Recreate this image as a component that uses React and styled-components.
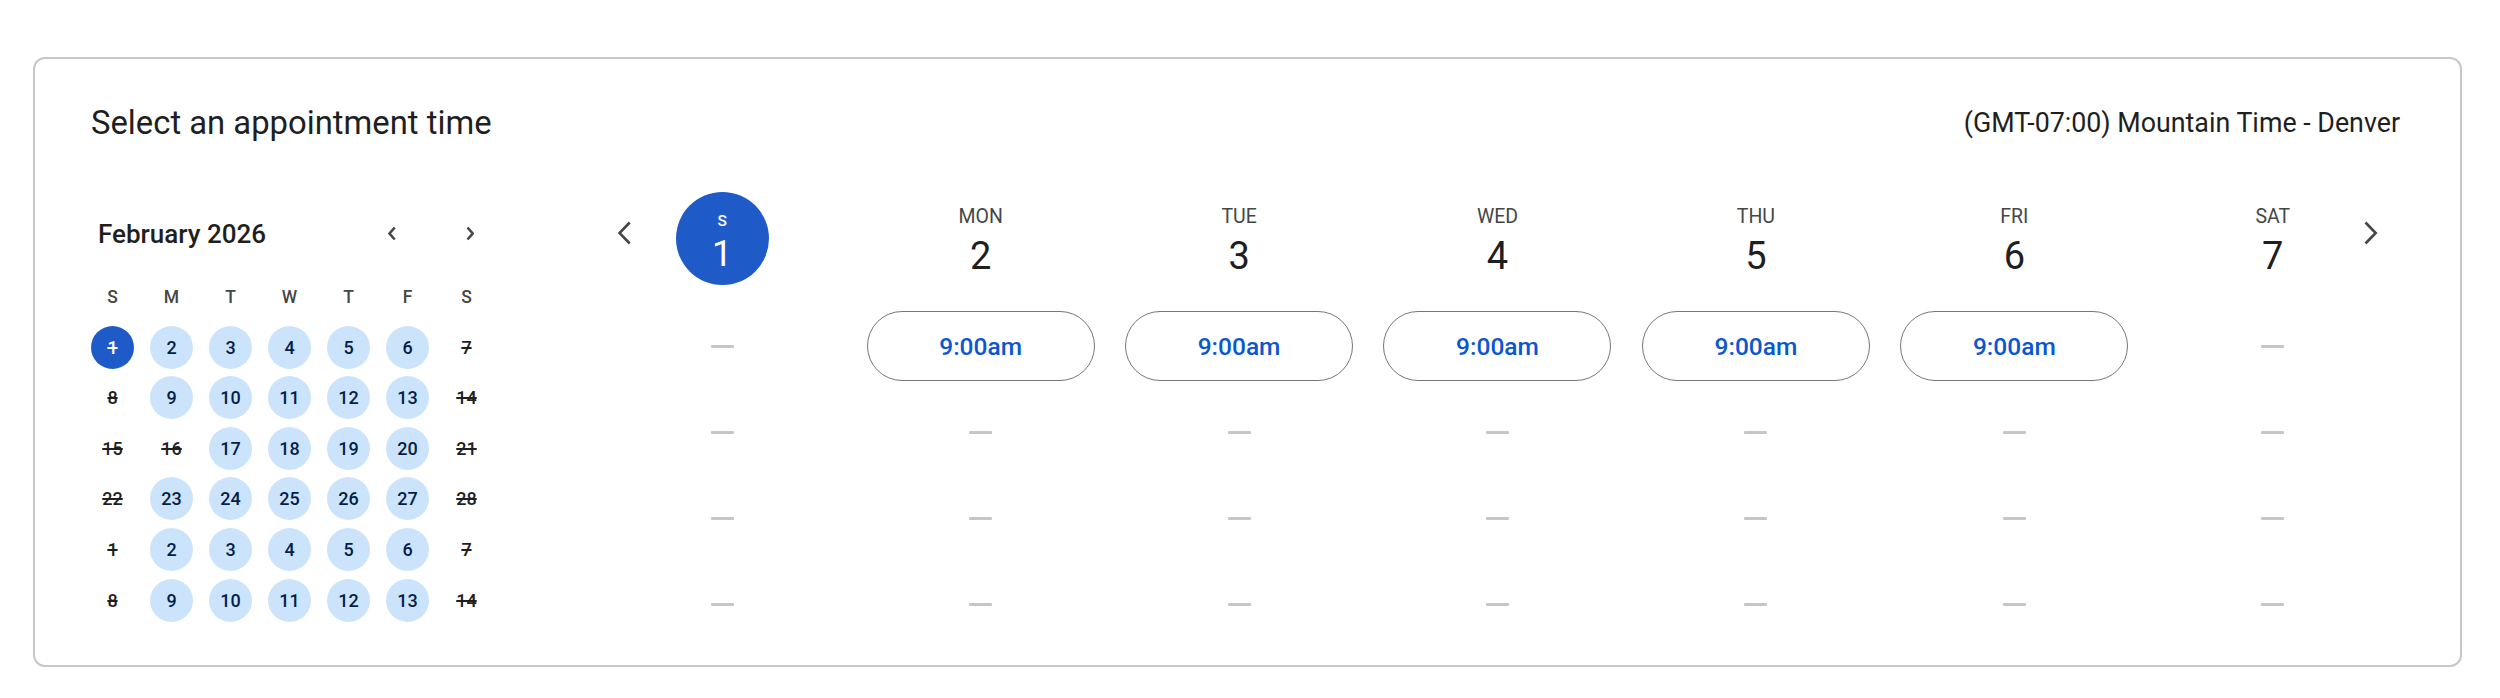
import React from 'react'
import styled, { createGlobalStyle } from 'styled-components'

const GlobalStyle = createGlobalStyle`
  html, body {
    margin: 0;
    padding: 0;
    background: #ffffff;
    font-family: Roboto, "Liberation Sans", Arial, sans-serif;
    color: #1f1f1f;
  }
  * { box-sizing: border-box; }
`

const Page = styled.div`
  padding: 57px 38px 0 33px;
`

const Card = styled.div`
  height: 610px;
  border: 2px solid #c7c7c7;
  border-radius: 12px;
  padding: 44px 58px 0 56px;
`

const TopBar = styled.div`
  display: flex;
  justify-content: space-between;
  align-items: flex-start;
`

const Title = styled.h1`
  margin: 0;
  font-size: 32.8px;
  line-height: 40px;
  font-weight: 400;
  color: #1f1f1f;
`

const TimeZone = styled.div`
  font-size: 26.8px;
  line-height: 40px;
  color: #1f1f1f;
  margin-right: 2px;
`

const Body = styled.div`
  display: flex;
  gap: 104px;
  margin-top: 49px;
`

const MiniCal = styled.div`
  width: 398px;
  flex: none;
  padding-top: 20px;
`

const MonthHeader = styled.div`
  display: flex;
  align-items: center;
  height: 43px;
  margin-bottom: 20px;
`

const MonthName = styled.div`
  flex: 1;
  padding-left: 7px;
  font-size: 26px;
  font-weight: 500;
  color: #1f1f1f;
`

const NavGroup = styled.div`
  display: flex;
  gap: 38px;
  margin-right: -1px;
`

const IconButton = styled.button`
  width: 40px;
  height: 40px;
  border: none;
  background: transparent;
  padding: 0;
  display: flex;
  align-items: center;
  justify-content: center;
  color: #444746;
  cursor: pointer;
`

const DayGrid = styled.div`
  display: grid;
  grid-template-columns: repeat(7, 43px);
  grid-auto-rows: 43px;
  column-gap: 16px;
  row-gap: 7.6px;
`

const WeekLetter = styled.div`
  display: flex;
  align-items: center;
  justify-content: center;
  font-size: 17.5px;
  font-weight: 500;
  color: #444746;
`

const DayCell = styled.div`
  display: flex;
  align-items: center;
  justify-content: center;
  border-radius: 50%;
  font-size: 18px;
  font-weight: 500;
  background: ${p => (p.$selected ? '#1f5bc8' : p.$open ? '#cce4fb' : 'transparent')};
  color: ${p => (p.$selected ? '#ffffff' : p.$open ? '#041e49' : '#1f1f1f')};
  text-decoration: ${p => (p.$open ? 'none' : 'line-through')};
  text-decoration-thickness: 1.5px;
`

const Week = styled.div`
  flex: 1;
  position: relative;
  display: grid;
  grid-template-columns: repeat(7, 1fr);
`

const WeekNav = styled(IconButton)`
  position: absolute;
  top: 17px;
  width: 48px;
  height: 48px;
  ${p => (p.$side === 'left' ? 'left: 8px;' : 'right: 7px;')}
`

const DayColumn = styled.div`
  display: flex;
  flex-direction: column;
  align-items: center;
`

const DayHead = styled.div`
  width: 93px;
  height: 93px;
  border-radius: 50%;
  display: flex;
  flex-direction: column;
  align-items: center;
  justify-content: flex-start;
  padding-top: ${p => (p.$selected ? '20px' : '13px')};
  background: ${p => (p.$selected ? '#1f5bc8' : 'transparent')};
  color: ${p => (p.$selected ? '#ffffff' : '#1f1f1f')};
`

const DayLabel = styled.div`
  font-size: ${p => (p.$selected ? '15.5px' : '19.5px')};
  line-height: ${p => (p.$selected ? '18px' : '24px')};
  font-weight: ${p => (p.$selected ? 500 : 400)};
  color: ${p => (p.$selected ? '#ffffff' : '#444746')};
`

const DayNumber = styled.div`
  font-size: ${p => (p.$selected ? '36px' : '38px')};
  line-height: 44px;
  font-weight: 400;
  margin-top: ${p => (p.$selected ? '2px' : '5px')};
`

const Slots = styled.div`
  display: flex;
  flex-direction: column;
  gap: 16px;
  margin-top: 26px;
  width: 100%;
  align-items: center;
`

const Slot = styled.div`
  height: 70px;
  width: 228px;
  display: flex;
  align-items: center;
  justify-content: center;
`

const TimeButton = styled.button`
  width: 228px;
  height: 70px;
  border: 1.5px solid #747775;
  border-radius: 35px;
  background: #ffffff;
  color: #0b57d0;
  font-family: inherit;
  font-size: 24.5px;
  font-weight: 500;
  cursor: pointer;
`

const Dash = styled.span`
  width: 23px;
  height: 3px;
  border-radius: 1px;
  background: #c4c7c5;
`

const Chevron = ({ dir, size }) => {
  const h = size
  const w = size * 0.55
  const points =
    dir === 'left'
      ? `${w - 1.5},1.5 1.5,${h / 2} ${w - 1.5},${h - 1.5}`
      : `1.5,1.5 ${w - 1.5},${h / 2} 1.5,${h - 1.5}`
  return (
    <svg width={w} height={h} viewBox={`0 0 ${w} ${h}`} fill="none">
      <polyline points={points} stroke="currentColor" strokeWidth="2.6" strokeLinejoin="miter" />
    </svg>
  )
}

const letters = ['S', 'M', 'T', 'W', 'T', 'F', 'S']

const weeks = [
  [1, 2, 3, 4, 5, 6, 7],
  [8, 9, 10, 11, 12, 13, 14],
  [15, 16, 17, 18, 19, 20, 21],
  [22, 23, 24, 25, 26, 27, 28],
  [1, 2, 3, 4, 5, 6, 7],
  [8, 9, 10, 11, 12, 13, 14],
]

const isOpen = (row, col) => {
  if (col === 0 || col === 6) return false
  if (row === 2 && col === 1) return false
  return true
}

const days = [
  { label: 'S', num: 1, selected: true, slots: [false, false, false, false] },
  { label: 'MON', num: 2, slots: [true, false, false, false] },
  { label: 'TUE', num: 3, slots: [true, false, false, false] },
  { label: 'WED', num: 4, slots: [true, false, false, false] },
  { label: 'THU', num: 5, slots: [true, false, false, false] },
  { label: 'FRI', num: 6, slots: [true, false, false, false] },
  { label: 'SAT', num: 7, slots: [false, false, false, false] },
]

const App = () => {
  return (
    <Page>
      <GlobalStyle />
      <Card>
        <TopBar>
          <Title>Select an appointment time</Title>
          <TimeZone>(GMT-07:00) Mountain Time - Denver</TimeZone>
        </TopBar>
        <Body>
          <MiniCal>
            <MonthHeader>
              <MonthName>February 2026</MonthName>
              <NavGroup>
                <IconButton aria-label="Previous month"><Chevron dir="left" size={15} /></IconButton>
                <IconButton aria-label="Next month"><Chevron dir="right" size={15} /></IconButton>
              </NavGroup>
            </MonthHeader>
            <DayGrid>
              {letters.map((l, i) => (
                <WeekLetter key={'l' + i}>{l}</WeekLetter>
              ))}
              {weeks.map((week, r) =>
                week.map((d, c) => (
                  <DayCell
                    key={r + '-' + c}
                    $open={isOpen(r, c)}
                    $selected={r === 0 && c === 0}
                  >
                    {d}
                  </DayCell>
                ))
              )}
            </DayGrid>
          </MiniCal>
          <Week>
            <WeekNav $side="left" aria-label="Previous week"><Chevron dir="left" size={24} /></WeekNav>
            <WeekNav $side="right" aria-label="Next week"><Chevron dir="right" size={24} /></WeekNav>
            {days.map(day => (
              <DayColumn key={day.num}>
                <DayHead $selected={day.selected}>
                  <DayLabel $selected={day.selected}>{day.label}</DayLabel>
                  <DayNumber $selected={day.selected}>{day.num}</DayNumber>
                </DayHead>
                <Slots>
                  {day.slots.map((open, i) => (
                    <Slot key={i}>
                      {open ? <TimeButton>9:00am</TimeButton> : <Dash />}
                    </Slot>
                  ))}
                </Slots>
              </DayColumn>
            ))}
          </Week>
        </Body>
      </Card>
    </Page>
  )
}

export default App
